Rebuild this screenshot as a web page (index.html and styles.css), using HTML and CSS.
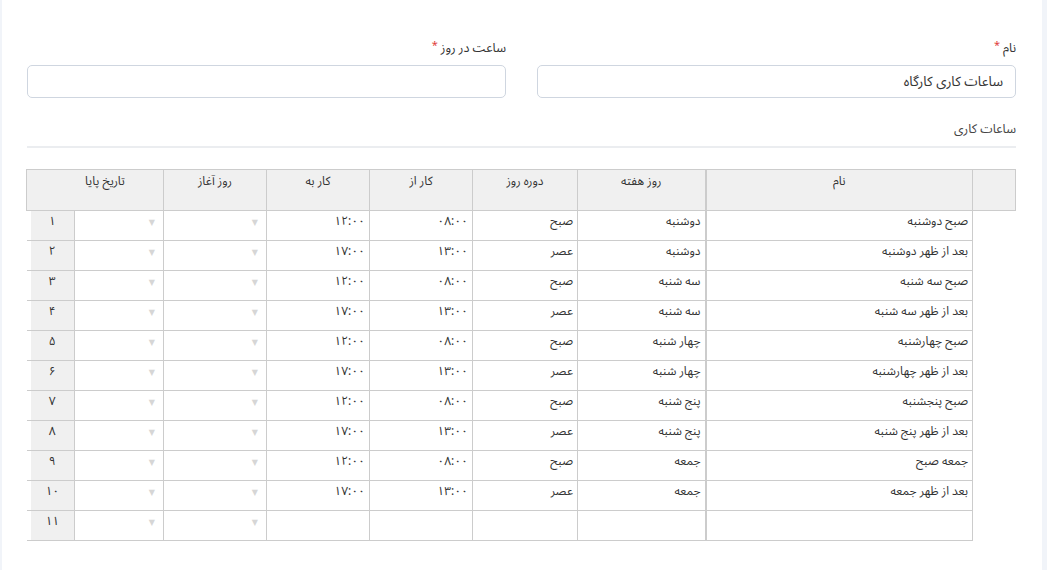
FILE: index.html
```html
<!DOCTYPE html>
<html lang="fa" dir="rtl">
<head>
<meta charset="utf-8">
<title>ساعات کاری</title>
<link rel="stylesheet" href="styles.css">
</head>
<body>
<div class="panel">
  <div class="form-row">
    <div class="field">
      <label class="label"><span>نام</span><span class="req">*</span></label>
      <div class="input">ساعات کاری کارگاه</div>
    </div>
    <div class="field">
      <label class="label"><span>ساعت در روز</span><span class="req">*</span></label>
      <div class="input"></div>
    </div>
  </div>
  <div class="section-title">ساعات کاری</div>
  <div class="divider"></div>

  <table class="grid">
    <colgroup>
      <col class="c-corner"><col class="c-name"><col class="c-day"><col class="c-period"><col class="c-from"><col class="c-to"><col class="c-start"><col class="c-end"><col class="c-num">
    </colgroup>
    <thead>
      <tr>
        <th class="corner"></th>
        <th class="name-col">نام</th>
        <th>روز هفته</th>
        <th>دوره روز</th>
        <th>کار از</th>
        <th>کار به</th>
        <th>روز آغاز</th>
        <th colspan="2" class="clip">تاریخ پایا</th>
      </tr>
    </thead>
    <tbody>
      <tr><td class="blank"></td><td class="name-col">صبح دوشنبه</td><td>دوشنبه</td><td>صبح</td><td>۰۸:۰۰</td><td>۱۲:۰۰</td><td class="dd"><span class="arrow">▼</span></td><td class="dd"><span class="arrow">▼</span></td><td class="num">۱</td></tr>
      <tr><td class="blank"></td><td class="name-col">بعد از ظهر دوشنبه</td><td>دوشنبه</td><td>عصر</td><td>۱۳:۰۰</td><td>۱۷:۰۰</td><td class="dd"><span class="arrow">▼</span></td><td class="dd"><span class="arrow">▼</span></td><td class="num">۲</td></tr>
      <tr><td class="blank"></td><td class="name-col">صبح سه شنبه</td><td>سه شنبه</td><td>صبح</td><td>۰۸:۰۰</td><td>۱۲:۰۰</td><td class="dd"><span class="arrow">▼</span></td><td class="dd"><span class="arrow">▼</span></td><td class="num">۳</td></tr>
      <tr><td class="blank"></td><td class="name-col">بعد از ظهر سه شنبه</td><td>سه شنبه</td><td>عصر</td><td>۱۳:۰۰</td><td>۱۷:۰۰</td><td class="dd"><span class="arrow">▼</span></td><td class="dd"><span class="arrow">▼</span></td><td class="num">۴</td></tr>
      <tr><td class="blank"></td><td class="name-col">صبح چهارشنبه</td><td>چهار شنبه</td><td>صبح</td><td>۰۸:۰۰</td><td>۱۲:۰۰</td><td class="dd"><span class="arrow">▼</span></td><td class="dd"><span class="arrow">▼</span></td><td class="num">۵</td></tr>
      <tr><td class="blank"></td><td class="name-col">بعد از ظهر چهارشنبه</td><td>چهار شنبه</td><td>عصر</td><td>۱۳:۰۰</td><td>۱۷:۰۰</td><td class="dd"><span class="arrow">▼</span></td><td class="dd"><span class="arrow">▼</span></td><td class="num">۶</td></tr>
      <tr><td class="blank"></td><td class="name-col">صبح پنجشنبه</td><td>پنج شنبه</td><td>صبح</td><td>۰۸:۰۰</td><td>۱۲:۰۰</td><td class="dd"><span class="arrow">▼</span></td><td class="dd"><span class="arrow">▼</span></td><td class="num">۷</td></tr>
      <tr><td class="blank"></td><td class="name-col">بعد از ظهر پنج شنبه</td><td>پنج شنبه</td><td>عصر</td><td>۱۳:۰۰</td><td>۱۷:۰۰</td><td class="dd"><span class="arrow">▼</span></td><td class="dd"><span class="arrow">▼</span></td><td class="num">۸</td></tr>
      <tr><td class="blank"></td><td class="name-col">جمعه صبح</td><td>جمعه</td><td>صبح</td><td>۰۸:۰۰</td><td>۱۲:۰۰</td><td class="dd"><span class="arrow">▼</span></td><td class="dd"><span class="arrow">▼</span></td><td class="num">۹</td></tr>
      <tr><td class="blank"></td><td class="name-col">بعد از ظهر جمعه</td><td>جمعه</td><td>عصر</td><td>۱۳:۰۰</td><td>۱۷:۰۰</td><td class="dd"><span class="arrow">▼</span></td><td class="dd"><span class="arrow">▼</span></td><td class="num">۱۰</td></tr>
      <tr><td class="blank"></td><td class="name-col"></td><td></td><td></td><td></td><td></td><td class="dd"><span class="arrow">▼</span></td><td class="dd"><span class="arrow">▼</span></td><td class="num">۱۱</td></tr>
    </tbody>
  </table>
</div>
</body>
</html>
```

FILE: styles.css
```css
html, body {
  margin: 0;
  padding: 0;
}
body {
  background: #f1f4f9;
  font-family: "Noto Sans Arabic", "Noto Naskh Arabic", "DejaVu Sans", "Noto Sans", sans-serif;
  color: #333;
  height: 570px;
  overflow: hidden;
}
.panel {
  background: #fff;
  margin-right: 5px;
  margin-left: 2px;
  height: 570px;
  box-sizing: border-box;
  padding: 38px 26px 0 25px;
}
.form-row {
  display: grid;
  grid-template-columns: 1fr 1fr;
  column-gap: 31px;
}
.field {
  display: flex;
  flex-direction: column;
}
.label {
  display: flex;
  align-items: flex-start;
  gap: 3px;
  font-size: 12.5px;
  line-height: 20px;
  height: 27px;
  color: #333;
}
.req {
  color: #e0403c;
  font-size: 11px;
  line-height: 16px;
}
.input {
  height: 33px;
  box-sizing: border-box;
  border: 1px solid #cfd6e0;
  border-radius: 5px;
  padding: 0 12px;
  font-size: 13.5px;
  line-height: 31px;
  color: #333;
}
.section-title {
  margin-top: 21px;
  font-size: 12.5px;
  line-height: 20px;
  color: #444;
}
.divider {
  margin-top: 7px;
  height: 2px;
  background: #ebedf0;
}
.grid {
  margin-top: 21px;
  border-collapse: collapse;
  table-layout: fixed;
  width: 989px;
  font-size: 12px;
}
.c-corner { width: 43px; }
.c-name { width: 267px; }
.c-day { width: 128px; }
.c-period { width: 105px; }
.c-from { width: 103px; }
.c-to { width: 103px; }
.c-start { width: 103px; }
.c-end { width: 89px; }
.c-num { width: 48px; }

.grid th {
  background: #f0f0f0;
  border: 1px solid #cccccc;
  height: 41px;
  padding: 2px 4px 0;
  box-sizing: border-box;
  vertical-align: top;
  font-weight: normal;
  line-height: 20px;
  color: #333;
  text-align: center;
  white-space: nowrap;
  overflow: hidden;
}
.grid th.clip {
  text-align: center;
  padding-left: 24px;
}
.grid th.name-col,
.grid td.name-col {
  border-left: 2px solid #cccccc;
}
.grid td {
  border: 1px solid #cccccc;
  height: 30px;
  padding: 0 4px;
  box-sizing: border-box;
  vertical-align: top;
  line-height: 21px;
  text-align: right;
  white-space: nowrap;
  overflow: hidden;
  color: #333;
}
.grid td.blank {
  border: none;
  border-left: 1px solid #cccccc;
  background: #fff;
}
.grid td.num {
  border-left: none;
  background: linear-gradient(to right, #ffffff 4px, #f0f0f0 4px);
  text-align: center;
  padding-left: 8px;
}
.grid td.dd {
  padding-right: 8px;
}
.arrow {
  color: #d6d6d6;
  font-size: 8px;
  font-family: "DejaVu Sans", sans-serif;
}
```
